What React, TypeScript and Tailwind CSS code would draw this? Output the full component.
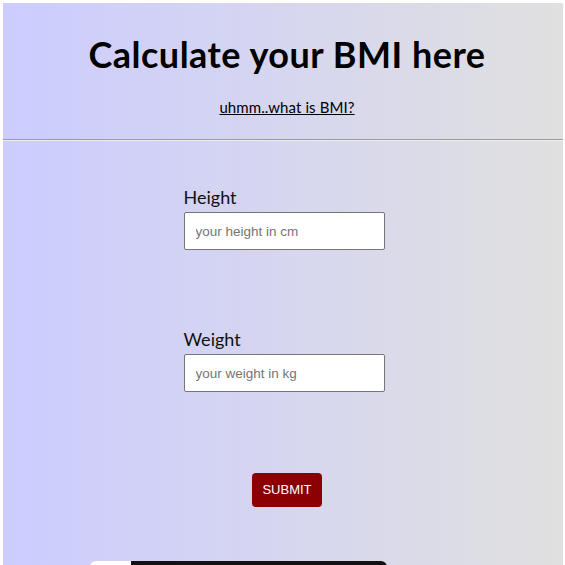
import React from "react";

export default function App() {
  return (
    <div className="min-h-[565px] bg-white pt-[3px] pl-[3px] pr-[2px]">
      <div className="min-h-[562px] bg-[linear-gradient(to_right,#ccccff,#e0e0e0)] [font-family:Lato,'Noto_Sans',sans-serif]">
        <header className="flex flex-col items-center pl-[8px] pt-[31px] h-[136px]">
          <h1 className="text-[36px] leading-[40px] font-bold text-black tracking-[0.5px]">
            Calculate your BMI here
          </h1>
          <a href="#" className="mt-[24px] text-[15px] leading-[18px] text-black underline tracking-[0.1px]">
            uhmm..what is BMI?
          </a>
        </header>
        <div className="border-t border-t-[#9a9a9a] border-b border-b-[#eeeeee]" />
        <main className="flex flex-col items-center">
          <div className="w-[201px] ml-[2px] pt-[45px]">
            <label className="block text-[18px] leading-[22px] text-[#111]">Height</label>
            <input
              className="mt-[4px] block w-[201px] h-[38px] bg-white border border-[#767676] rounded-[2px] px-[11px] text-[13.5px] [font-family:'Liberation_Sans',Arial,sans-serif] placeholder:text-[#757575] outline-none"
              placeholder="your height in cm"
            />
          </div>
          <div className="w-[201px] ml-[2px] pt-[78px]">
            <label className="block text-[18px] leading-[22px] text-[#111]">Weight</label>
            <input
              className="mt-[4px] block w-[201px] h-[38px] bg-white border border-[#767676] rounded-[2px] px-[11px] text-[13.5px] [font-family:'Liberation_Sans',Arial,sans-serif] placeholder:text-[#757575] outline-none"
              placeholder="your weight in kg"
            />
          </div>
          <button className="mt-[81px] ml-[8px] w-[70px] h-[34px] bg-[#8b0000] text-white rounded-[4px] text-[13px] [font-family:'Liberation_Sans',Arial,sans-serif]">
            SUBMIT
          </button>
          <div className="mt-[54px] self-start ml-[87px] w-[297px] h-[20px] flex rounded-t-[6px] overflow-hidden">
            <div className="w-[41px] bg-white" />
            <div className="flex-1 bg-[#121212]" />
          </div>
        </main>
      </div>
    </div>
  );
}
